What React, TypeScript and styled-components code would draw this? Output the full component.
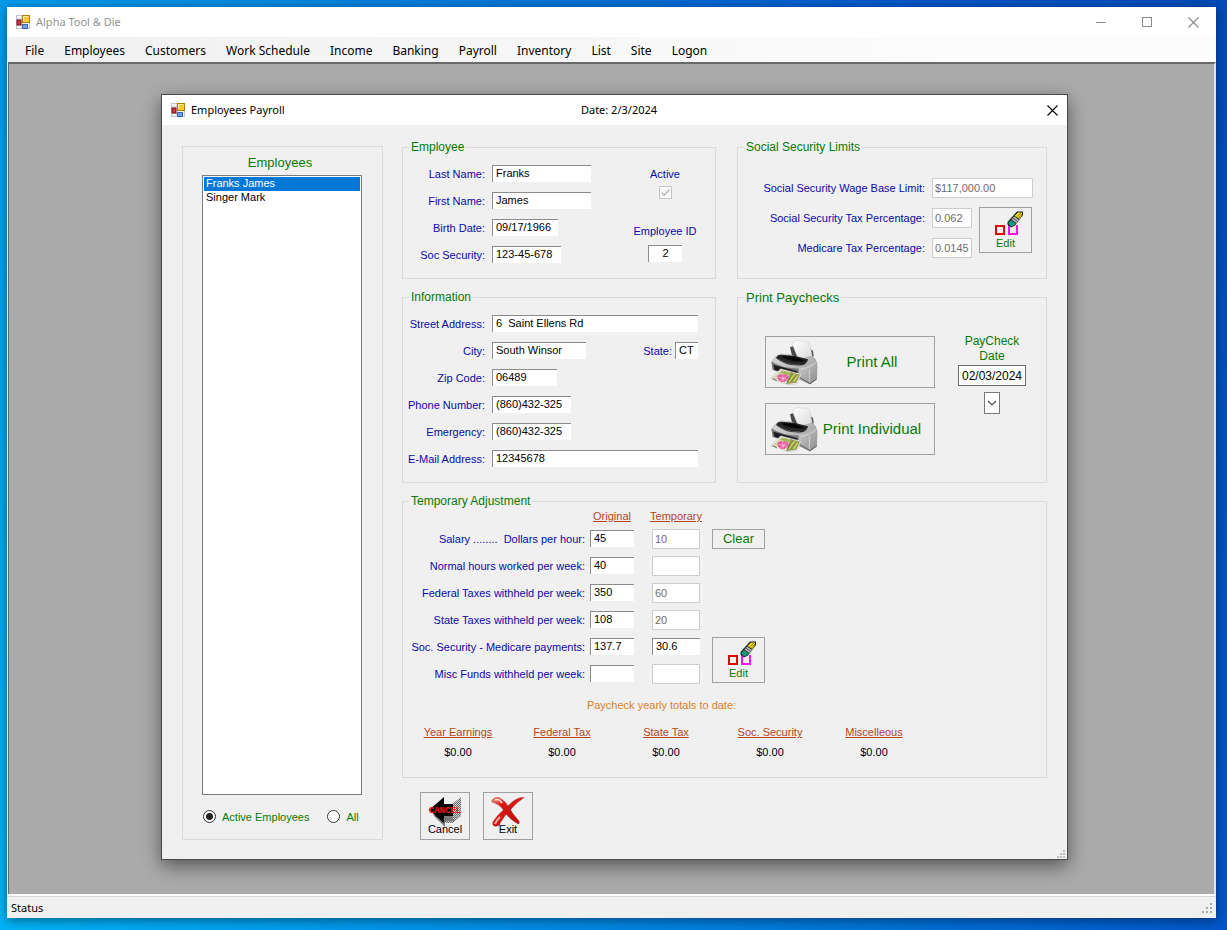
import React from "react";
import styled, { createGlobalStyle, css } from "styled-components";

const GREEN = "#087a08";
const BLUE = "#0a0aa8";
const RUST = "#b5451b";
const FACE = "#f0f0f0";

const GlobalStyle = createGlobalStyle`
  *, *::before, *::after { box-sizing: border-box; }
  body { margin: 0; font-family: "Liberation Sans", Arial, sans-serif; font-size: 11px; line-height: 14px; color: #000; }
  button, input, select { font: inherit; color: inherit; }
`;

const Desktop = styled.div`
  min-height: 100vh;
  min-width: 1227px;
  display: flex;
  padding: 7px 11px 12px 7px;
  background: linear-gradient(72deg, #00b2f4 0%, #0096e8 25%, #0078d9 52%, #0056c8 80%, #004bb8 100%);
`;

const AppWindow = styled.div`
  flex: 1;
  display: flex;
  flex-direction: column;
  background: #fff;
  box-shadow: 0 2px 10px rgba(0, 0, 0, 0.45);
`;

const TitleBar = styled.header`
  height: 30px;
  display: flex;
  align-items: center;
  padding-left: 9px;
  gap: 5px;
  font-family: "Noto Sans", "Open Sans", sans-serif;
  font-size: 11px;
  color: #929292;
`;

const TitleText = styled.h1`
  flex: 1;
  margin: 0;
  font: inherit;
`;

const WindowButtons = styled.div`
  display: flex;
`;

const CaptionButton = styled.button`
  width: 46px;
  height: 30px;
  display: flex;
  align-items: center;
  justify-content: center;
  padding: 0;
  border: 0;
  background: transparent;
`;

const MenuBar = styled.nav`
  height: 25px;
  display: flex;
  align-items: center;
  padding: 3px 0 0 8px;
  background: linear-gradient(90deg, #f0f0f0, #fcfcfc 80%);
`;

const MenuItem = styled.button`
  padding: 0 10px;
  border: 0;
  background: transparent;
  font-family: "Noto Sans", "Open Sans", sans-serif;
  font-size: 12px;
  line-height: 20px;
  white-space: nowrap;
`;

const Workspace = styled.main`
  flex: 1;
  display: flex;
  padding: 30px 146px 34px 152px;
  margin-left: 1px;
  background: #ababab;
  border: solid #696969;
  border-width: 2px 0 0 1px;
  border-right: 2px solid #e3e3e3;
`;

const StatusBar = styled.footer`
  height: 24px;
  display: flex;
  align-items: center;
  justify-content: space-between;
  padding: 2px 3px 0 4px;
  background: ${FACE};
  border-top: 2px solid #fff;
  box-shadow: inset 0 1px #d7d7d7;
  font-family: "Noto Sans", "Open Sans", sans-serif;
  font-size: 11px;
`;

const Dialog = styled.section`
  flex: 1;
  min-width: 907px;
  display: flex;
  flex-direction: column;
  background: ${FACE};
  border: 1px solid #484848;
  box-shadow: 0 6px 18px rgba(0, 0, 0, 0.5);
`;

const DialogTitle = styled.header`
  height: 30px;
  display: grid;
  grid-template-columns: 1fr auto 1fr;
  align-items: center;
  padding-left: 9px;
  background: #fff;
  font-family: "Noto Sans", "Open Sans", sans-serif;
  font-size: 11px;
`;

const DialogName = styled.h2`
  display: flex;
  align-items: center;
  gap: 5px;
  margin: 0;
  font: inherit;
`;

const DialogClose = styled(CaptionButton)`
  width: 30px;
  justify-self: end;
`;

const DialogBody = styled.div`
  flex: 1;
  display: grid;
  grid-template-columns: 201px minmax(0, 1fr);
  column-gap: 19px;
  padding: 15px 20px 0;
`;

const DialogFoot = styled.div`
  height: 19px;
  display: flex;
  justify-content: flex-end;
  align-items: flex-end;
  padding: 0 1px 0;
`;

const GroupBox = styled.fieldset<{ $wide?: boolean }>`
  min-width: 0;
  margin: 0;
  padding: 0;
  border: 1px solid #dadada;
  ${(p) => p.$wide && css`grid-column: 1 / -1;`}
`;

const GroupTitle = styled.legend<{ $large?: boolean }>`
  margin-left: 6px;
  padding: 0 2px;
  font-size: ${(p) => (p.$large ? 13 : 12)}px;
  line-height: 15px;
  color: ${GREEN};
`;

const EmployeePanel = styled.section`
  display: flex;
  flex-direction: column;
  margin-top: 6px;
  padding: 8px 20px 0 19px;
  border: 1px solid #dadada;
`;

const PanelTitle = styled.label`
  padding: 0 4px 5px 0;
  text-align: center;
  font-size: 13px;
  line-height: 15px;
  color: ${GREEN};
`;

const EmployeeList = styled.select`
  flex: 1;
  padding: 1px;
  overflow: hidden;
  border: 1px solid #7a7a7a;
  border-radius: 0;
  outline: 0;
  background: #fff;

  option {
    min-height: 14px;
    padding: 0 2px;
    line-height: 14px;
    color: #000;
  }
  option:checked {
    background: linear-gradient(#0078d7, #0078d7);
    -webkit-text-fill-color: #fff;
  }
`;

const FilterRow = styled.div`
  height: 44px;
  display: flex;
  align-items: center;
  gap: 18px;
  padding: 0 0 1px 1px;
`;

const FilterOption = styled.label`
  display: flex;
  align-items: center;
  gap: 6px;
  color: ${GREEN};
`;

const Radio = styled.input`
  appearance: none;
  width: 13px;
  height: 13px;
  margin: 0;
  border: 1px solid #333;
  border-radius: 50%;
  background: #fff;
  &:checked {
    background: radial-gradient(circle, #222 3px, #fff 4px);
  }
`;

const Content = styled.div`
  min-width: 0;
  display: flex;
  flex-direction: column;
`;

const Groups = styled.div`
  display: grid;
  grid-template-columns: 314px minmax(310px, 1fr);
  gap: 11px 21px;
`;

const ActionRow = styled.div`
  display: flex;
  gap: 13px;
  padding: 14px 18px 0;
`;

const Split = styled.div`
  display: flex;
  padding: 5px 17px 10px 0;
`;

const FieldGrid = styled.div`
  flex: 1;
  display: grid;
  grid-template-columns: 82px minmax(0, 1fr);
  grid-auto-rows: 27px;
  column-gap: 7px;
  align-items: center;
`;

const FieldLabel = styled.label<{ $right?: boolean }>`
  color: ${BLUE};
  white-space: nowrap;
  ${(p) => p.$right && css`justify-self: end;`}
`;

const TextBox = styled.input<{ $width?: number; $center?: boolean }>`
  width: ${(p) => (p.$width ? `${p.$width}px` : "100%")};
  height: 17px;
  padding: 0 3px 2px;
  border: solid #8c8c8c;
  border-width: 1px 0 0 1px;
  border-radius: 0;
  outline: 0;
  background: #fff;
  text-align: ${(p) => (p.$center ? "center" : "left")};

  &:disabled {
    height: 20px;
    padding: 0 2px;
    border: 1px solid #cccccc;
    color: #6d6d6d;
  }
`;

const CityLine = styled.div`
  display: flex;
  align-items: center;
  gap: 3px;
`;

const StateField = styled.div`
  display: flex;
  align-items: center;
  gap: 3px;
  margin-left: auto;
`;

const SideColumn = styled.div`
  width: 66px;
  display: flex;
  flex-direction: column;
  justify-content: space-between;
  padding: 7px 0 6px;
`;

const SideField = styled.div<{ $gap: number }>`
  display: flex;
  flex-direction: column;
  align-items: center;
  gap: ${(p) => p.$gap}px;
`;

const CheckBox = styled.input`
  appearance: none;
  width: 13px;
  height: 13px;
  margin: 0;
  border: 1px solid #c4c4c4;
  background: #fbfbfb;
  &:checked {
    background: #fbfbfb
      url("data:image/svg+xml,%3Csvg xmlns='http://www.w3.org/2000/svg' viewBox='0 0 11 11'%3E%3Cpath d='M1.5 5.5l2.7 2.7L9.5 2.5' fill='none' stroke='%23b4b4b4' stroke-width='1.3'/%3E%3C/svg%3E");
  }
`;

const LimitsGrid = styled.div`
  display: grid;
  grid-template-columns: 1fr 40px 54px;
  grid-auto-rows: 30px;
  column-gap: 7px;
  align-items: center;
  padding: 18px 13px 0 0;
`;

const WideCell = styled.div`
  grid-column: span 2;
`;

const PushButton = styled.button`
  display: flex;
  align-items: center;
  justify-content: center;
  padding: 0;
  border: 1px solid #a0a0a0;
  border-radius: 0;
  background: ${FACE};
  color: ${GREEN};
`;

const EditButton = styled(PushButton)`
  grid-row: span 2;
  align-self: start;
  width: 53px;
  height: 46px;
  margin-top: 4px;
  flex-direction: column;
`;

const ClearButton = styled(PushButton)`
  width: 53px;
  height: 20px;
  font-size: 13px;
`;

const PrintButton = styled(PushButton)`
  width: 170px;
  height: 52px;
  padding: 0 8px 0 4px;
  font-size: 15px;
`;

const PrintLabel = styled.span`
  flex: 1;
  text-align: center;
  white-space: nowrap;
`;

const ActionButton = styled(PushButton)`
  width: 50px;
  height: 48px;
  flex-direction: column;
  justify-content: flex-start;
  padding-top: 3px;
  color: #000;
`;

const ActionLabel = styled.span`
  position: relative;
  margin-top: -6px;
`;

const PrintLayout = styled.div`
  display: flex;
  justify-content: space-between;
  padding: 29px 20px 0 27px;
`;

const PrintButtons = styled.div`
  display: flex;
  flex-direction: column;
  gap: 15px;
  padding-top: 2px;
`;

const DateColumn = styled.div`
  width: 68px;
  display: flex;
  flex-direction: column;
  align-items: center;
`;

const DateLabel = styled.label`
  font-size: 12px;
  line-height: 15px;
  text-align: center;
  color: ${GREEN};
`;

const DateBox = styled.input`
  width: 68px;
  height: 21px;
  margin: 1px 0 6px;
  padding: 0;
  border: 1px solid #6a6a6a;
  border-radius: 0;
  background: #fff;
  font-size: 12px;
  text-align: center;
`;

const DateDrop = styled(PushButton)`
  width: 16px;
  height: 22px;
  border-color: #7a7a7a;
  background: #fff;
`;

const AdjustGrid = styled.div`
  display: grid;
  grid-template-columns: 187px 44px 78px 53px;
  grid-template-rows: 16px;
  grid-auto-rows: 27px;
  align-items: center;
`;

const AdjustLabel = styled(FieldLabel)`
  grid-column: 1;
  justify-self: end;
  padding-right: 5px;
  white-space: pre;
`;

const ColumnTitle = styled.span`
  align-self: start;
  color: ${RUST};
  text-decoration: underline;
  text-align: center;
`;

const OriginalTitle = styled(ColumnTitle)`
  grid-column: 2;
`;

const TemporaryCell = styled.div`
  align-self: stretch;
  display: flex;
  align-items: center;
  justify-content: center;
  padding-left: 6px;
`;

const Totals = styled.table`
  width: 520px;
  margin-left: 3px;
  margin-bottom: 18px;
  table-layout: fixed;
  border-collapse: collapse;

  caption {
    padding: 11px 9px 13px 0;
    color: #dc7f2a;
  }
  th {
    padding: 0 0 6px;
    font-weight: normal;
    text-decoration: underline;
    color: ${RUST};
  }
  td {
    padding: 0;
    text-align: center;
  }
`;

const Grip = () => (
  <svg width="12" height="12" viewBox="0 0 12 12" fill="#a8a8a8" aria-hidden="true">
    <path d="M9 1h2v2H9zM9 5h2v2H9zM9 9h2v2H9zM5 5h2v2H5zM5 9h2v2H5zM1 9h2v2H1z" />
  </svg>
);

const DialogGrip = () => (
  <svg width="10" height="10" viewBox="0 0 10 10" fill="#bcbcbc" aria-hidden="true">
    <path d="M7 1h2v2H7zM7 4h2v2H7zM7 7h2v2H7zM4 4h2v2H4zM4 7h2v2H4zM1 7h2v2H1z" />
  </svg>
);

const FormIcon = () => (
  <svg width="15" height="15" viewBox="0 0 15 15" aria-hidden="true">
    <rect x="0.5" y="0.5" width="13" height="13" fill="#f4f4f4" stroke="#c4c4c8" />
    <path d="M6 1v12M1 4h5M1 10h6" stroke="#c8c8cc" />
    <rect x="1" y="5" width="4" height="5" fill="#c43c3c" stroke="#7d1016" />
    <rect x="6.5" y="0.5" width="7" height="7" fill="#f6c93a" stroke="#a87d12" />
    <path d="M7.5 6V1.5H12" fill="none" stroke="#fdeaa0" />
    <rect x="6.5" y="9.5" width="5" height="4" fill="#6f9fe8" stroke="#3a66b8" />
  </svg>
);

const CloseGlyph = ({ color }: { color: string }) => (
  <svg width="11" height="11" viewBox="0 0 11 11" aria-hidden="true">
    <path d="M0.5 0.5l10 10M10.5 0.5l-10 10" stroke={color} strokeWidth="1.1" />
  </svg>
);

const EditIcon = () => (
  <svg width="34" height="25" viewBox="0 0 34 25" aria-hidden="true">
    <rect x="7" y="15" width="8" height="8" fill="none" stroke="#e00808" strokeWidth="2" />
    <path d="M20 14v9h8v-9" fill="none" stroke="#e61be6" strokeWidth="2" />
    <path d="M18.5 11L28 0.5h6V4l-8 10.5-4 2-3.5-3z" fill="#1c1c1c" />
    <path d="M19.5 11.5L22 9l5 3.5-1.5 1.5-3.5 1.5-2.5-2.5z" fill="#149a78" />
    <path d="M22.5 8.5L25 5.5l5 3.5-2.5 3z" fill="#bdbdbd" />
    <path d="M23.7 7l5 3.5" stroke="#4a4a4a" />
    <path d="M25.5 5L29 1.5h4V4l-2.5 4z" fill="#f2df20" />
    <path d="M27.5 6l5-4.5M29.5 7l3.5-4" stroke="#6e6212" strokeWidth="0.8" />
  </svg>
);

const PrinterIcon = ({ id }: { id: string }) => (
  <svg width="48" height="46" viewBox="16 15 144 138" aria-hidden="true">
    <defs>
      <linearGradient id={`${id}-case`} x1="0" y1="0" x2="1" y2="1">
        <stop offset="0" stopColor="#dcdcdc" />
        <stop offset="0.5" stopColor="#b6b6b6" />
        <stop offset="1" stopColor="#7a7a7a" />
      </linearGradient>
      <linearGradient id={`${id}-side`} x1="0" y1="0" x2="1" y2="1">
        <stop offset="0" stopColor="#cfcfcf" />
        <stop offset="1" stopColor="#8c8c8c" />
      </linearGradient>
      <linearGradient id={`${id}-paper`} x1="0" y1="0" x2="1" y2="1">
        <stop offset="0" stopColor="#ffffff" />
        <stop offset="1" stopColor="#d9d9d9" />
      </linearGradient>
    </defs>
    <path d="M76 40l11-4 14 37-16 4z" fill="#4a4a4a" />
    <path d="M134 44l11 6 2 14-4 12-12-2z" fill="#5a5a5a" />
    <path d="M84 34q2-13 12-14l30 2q8 1 10 10l7 36q-20 12-42 8z" fill={`url(#${id}-paper)`} stroke="#b4b4b4" />
    <path d="M22 84q6-16 24-24l34 2 26 14 36-10q13 8 15 24l-1 44-20 16-34-16-78-28z" fill={`url(#${id}-case)`} stroke="#8c8c8c" />
    <path d="M34 72q4-10 16-10l42 4 38 10q-2 14-18 18-48 4-78-22z" fill="#262626" />
    <path d="M52 66l36 2 34 12q-24 8-66-8z" fill="#080808" />
    <path d="M42 76q30 18 64 16" fill="none" stroke="#646464" strokeWidth="2" />
    <path d="M20 82q30 22 84 22l2 26-82-22z" fill="#777" />
    <path d="M26 92l72 20v14l-68-18z" fill="#1b1b1b" />
    <path d="M102 102q28-4 48-22l8 18-2 38-20 15-34-15z" fill={`url(#${id}-side)`} />
    <path d="M108 106q26-2 46-20M134 106v40" fill="none" stroke="#e6e6e6" strokeWidth="2" />
    <path d="M104 130l32 19 20-14" fill="none" stroke="#5a5a5a" strokeWidth="3" />
    <path d="M18 134l30-30 62 16-14 30-26 2z" fill="#ededed" stroke="#9c9c9c" />
    <path d="M24 132l26-24 32 8-22 30z" fill="#dccfae" />
    <path d="M78 114l28 8-12 24-30 4z" fill="#8b9648" />
    <path d="M72 144l20-26M86 144l14-20" stroke="#d9d36c" strokeWidth="4" />
    <path d="M44 114l14-4 22 7-12 8z" fill="#a6b45e" />
    <path d="M38 128q6-10 16-6 14-2 18 6-2 12-14 16-16 2-20-16z" fill="#e35aa0" />
    <path d="M42 130l24 6M54 124l2 18M66 126l-18 14" stroke="#fbd4e6" strokeWidth="2" />
    <path d="M24 134l12 6M68 144l8-12" stroke="#5a6c2a" strokeWidth="3" />
  </svg>
);

const CancelIcon = () => (
  <svg width="34" height="32" viewBox="0 0 34 32" aria-hidden="true">
    <defs>
      <pattern id="cancel-dither" width="2" height="2" patternUnits="userSpaceOnUse">
        <rect width="2" height="2" fill="#cccccc" />
        <path d="M0 0h1v1H0zM1 1h1v1H1z" fill="#707070" />
      </pattern>
    </defs>
    <path d="M16 8h8l9-7v19l-8 7h-8z" fill="url(#cancel-dither)" />
    <path d="M5 19l12 12v-6h9l-2-5H13z" fill="#7a7a7a" />
    <path d="M1 14L16 1v7h9v12h-9v7z" fill="#000" />
    <text x="17" y="17" textAnchor="middle" fontFamily="Liberation Mono, monospace" fontSize="9" fontWeight="bold" fill="#f01818">CANCEL</text>
  </svg>
);

const ExitIcon = () => (
  <svg width="34" height="32" viewBox="0 0 34 32" aria-hidden="true">
    <defs>
      <linearGradient id="exit-red" x1="0" y1="0" x2="0.6" y2="1">
        <stop offset="0" stopColor="#f2a8a0" />
        <stop offset="0.35" stopColor="#dc1a14" />
        <stop offset="1" stopColor="#c01010" />
      </linearGradient>
    </defs>
    <path d="M33 1.5Q25 1 17 10Q6 19 2 26Q1 31 6 30Q9 30 9 27Q13 20 20 13Q26 6 33 1.5z" fill="url(#exit-red)" stroke="#b41c18" strokeWidth="0.5" />
    <path d="M1 4Q4 0 9 2Q14 5 17 10Q22 19 28 25Q29 28 27 28Q18 23 13 15Q9 8 1 6z" fill="url(#exit-red)" stroke="#b41c18" strokeWidth="0.5" />
    <path d="M4 4Q8 2 11 7" fill="none" stroke="#fbd8d2" strokeWidth="1.5" />
    <path d="M4 28Q5 25 9 21" fill="none" stroke="#f6a8a0" strokeWidth="2" />
  </svg>
);

const MENU = ["File", "Employees", "Customers", "Work Schedule", "Income", "Banking", "Payroll", "Inventory", "List", "Site", "Logon"];

const EMPLOYEE_FIELDS = [
  { id: "last", label: "Last Name:", value: "Franks", width: 99 },
  { id: "first", label: "First Name:", value: "James", width: 99 },
  { id: "birth", label: "Birth Date:", value: "09/17/1966", width: 66 },
  { id: "ssn", label: "Soc Security:", value: "123-45-678", width: 69 },
];

const CONTACT_FIELDS = [
  { id: "zip", label: "Zip Code:", value: "06489", width: 65 },
  { id: "phone", label: "Phone Number:", value: "(860)432-325", width: 79 },
  { id: "emergency", label: "Emergency:", value: "(860)432-325", width: 79 },
  { id: "email", label: "E-Mail Address:", value: "12345678", width: 0 },
];

const ADJUSTMENTS = [
  { id: "salary", label: "Salary ........  Dollars per hour:", original: "45", temporary: "10", locked: true },
  { id: "hours", label: "Normal hours worked per week:", original: "40", temporary: "", locked: true },
  { id: "federal", label: "Federal Taxes withheld per week:", original: "350", temporary: "60", locked: true },
  { id: "state-tax", label: "State Taxes withheld per week:", original: "108", temporary: "20", locked: true },
  { id: "medicare", label: "Soc. Security - Medicare payments:", original: "137.7", temporary: "30.6", locked: false },
  { id: "misc", label: "Misc Funds withheld per week:", original: "", temporary: "", locked: true },
];

const TOTALS = [
  ["Year Earnings", "$0.00"],
  ["Federal Tax", "$0.00"],
  ["State Tax", "$0.00"],
  ["Soc. Security", "$0.00"],
  ["Miscelleous", "$0.00"],
];

type Field = { id: string; label: string; value: string; width: number };

const FieldRow = ({ id, label, value, width }: Field) => (
  <>
    <FieldLabel $right htmlFor={id}>{label}</FieldLabel>
    <TextBox id={id} defaultValue={value} $width={width} />
  </>
);

const EmployeesSidebar = () => (
  <EmployeePanel>
    <PanelTitle htmlFor="employee-list">Employees</PanelTitle>
    <EmployeeList id="employee-list" size={20} defaultValue="Franks James">
      <option>Franks James</option>
      <option>Singer Mark</option>
    </EmployeeList>
    <FilterRow>
      <FilterOption>
        <Radio type="radio" name="filter" defaultChecked />
        Active Employees
      </FilterOption>
      <FilterOption>
        <Radio type="radio" name="filter" />
        All
      </FilterOption>
    </FilterRow>
  </EmployeePanel>
);

const EmployeeGroup = () => (
  <GroupBox>
    <GroupTitle>Employee</GroupTitle>
    <Split>
      <FieldGrid>
        {EMPLOYEE_FIELDS.map((f) => <FieldRow key={f.id} {...f} />)}
      </FieldGrid>
      <SideColumn>
        <SideField $gap={5}>
          <FieldLabel htmlFor="active">Active</FieldLabel>
          <CheckBox id="active" type="checkbox" defaultChecked disabled />
        </SideField>
        <SideField $gap={7}>
          <FieldLabel htmlFor="employee-id">Employee ID</FieldLabel>
          <TextBox id="employee-id" defaultValue="2" $width={34} $center />
        </SideField>
      </SideColumn>
    </Split>
  </GroupBox>
);

const LimitsGroup = () => (
  <GroupBox>
    <GroupTitle>Social Security Limits</GroupTitle>
    <LimitsGrid>
      <FieldLabel $right htmlFor="wage-limit">Social Security Wage Base Limit:</FieldLabel>
      <WideCell><TextBox id="wage-limit" defaultValue="$117,000.00" disabled /></WideCell>
      <FieldLabel $right htmlFor="ss-rate">Social Security Tax Percentage:</FieldLabel>
      <TextBox id="ss-rate" defaultValue="0.062" disabled />
      <EditButton type="button"><EditIcon />Edit</EditButton>
      <FieldLabel $right htmlFor="medicare-rate">Medicare Tax Percentage:</FieldLabel>
      <TextBox id="medicare-rate" defaultValue="0.0145" disabled />
    </LimitsGrid>
  </GroupBox>
);

const InformationGroup = () => (
  <GroupBox>
    <GroupTitle>Information</GroupTitle>
    <Split>
      <FieldGrid>
        <FieldRow id="street" label="Street Address:" value="6  Saint Ellens Rd" width={0} />
        <FieldLabel $right htmlFor="city">City:</FieldLabel>
        <CityLine>
          <TextBox id="city" defaultValue="South Winsor" $width={94} />
          <StateField>
            <FieldLabel htmlFor="state">State:</FieldLabel>
            <TextBox id="state" defaultValue="CT" $width={23} />
          </StateField>
        </CityLine>
        {CONTACT_FIELDS.map((f) => <FieldRow key={f.id} {...f} />)}
      </FieldGrid>
    </Split>
  </GroupBox>
);

const PaychecksGroup = () => (
  <GroupBox>
    <GroupTitle $large>Print Paychecks</GroupTitle>
    <PrintLayout>
      <PrintButtons>
        <PrintButton type="button"><PrinterIcon id="all" /><PrintLabel>Print All</PrintLabel></PrintButton>
        <PrintButton type="button"><PrinterIcon id="one" /><PrintLabel>Print Individual</PrintLabel></PrintButton>
      </PrintButtons>
      <DateColumn>
        <DateLabel htmlFor="paycheck-date">PayCheck Date</DateLabel>
        <DateBox id="paycheck-date" defaultValue="02/03/2024" />
        <DateDrop type="button" aria-label="Choose date">
          <svg width="10" height="6" viewBox="0 0 10 6" aria-hidden="true">
            <path d="M1 1l4 4 4-4" fill="none" stroke="#444" strokeWidth="1.1" />
          </svg>
        </DateDrop>
      </DateColumn>
    </PrintLayout>
  </GroupBox>
);

const AdjustmentGroup = () => (
  <GroupBox $wide>
    <GroupTitle>Temporary Adjustment</GroupTitle>
    <AdjustGrid>
      <OriginalTitle>Original</OriginalTitle>
      <TemporaryCell><ColumnTitle>Temporary</ColumnTitle></TemporaryCell>
      {ADJUSTMENTS.map((row) => (
        <React.Fragment key={row.id}>
          <AdjustLabel htmlFor={row.id}>{row.label}</AdjustLabel>
          <TextBox id={row.id} defaultValue={row.original} />
          <TemporaryCell>
            <TextBox aria-label={row.label} defaultValue={row.temporary} $width={48} disabled={row.locked} />
          </TemporaryCell>
          {row.id === "salary" && <ClearButton type="button">Clear</ClearButton>}
          {row.id === "medicare" && <EditButton type="button"><EditIcon />Edit</EditButton>}
        </React.Fragment>
      ))}
    </AdjustGrid>
    <Totals>
      <caption>Paycheck yearly totals to date:</caption>
      <thead>
        <tr>{TOTALS.map(([name]) => <th key={name} scope="col">{name}</th>)}</tr>
      </thead>
      <tbody>
        <tr>{TOTALS.map(([name, amount]) => <td key={name}>{amount}</td>)}</tr>
      </tbody>
    </Totals>
  </GroupBox>
);

export default function App() {
  return (
    <>
      <GlobalStyle />
      <Desktop>
        <AppWindow>
          <TitleBar>
            <FormIcon />
            <TitleText>Alpha Tool &amp; Die</TitleText>
            <WindowButtons>
              <CaptionButton type="button" aria-label="Minimize">
                <svg width="11" height="11" viewBox="0 0 11 11" aria-hidden="true"><path d="M0 5.5h10" stroke="#8a8a8a" /></svg>
              </CaptionButton>
              <CaptionButton type="button" aria-label="Maximize">
                <svg width="11" height="11" viewBox="0 0 11 11" aria-hidden="true"><rect x="0.5" y="0.5" width="9" height="9" fill="none" stroke="#8a8a8a" /></svg>
              </CaptionButton>
              <CaptionButton type="button" aria-label="Close"><CloseGlyph color="#8a8a8a" /></CaptionButton>
            </WindowButtons>
          </TitleBar>
          <MenuBar>
            {MENU.map((item) => <MenuItem key={item} type="button">{item}</MenuItem>)}
          </MenuBar>
          <Workspace>
            <Dialog>
              <DialogTitle>
                <DialogName><FormIcon />Employees Payroll</DialogName>
                <span>Date: 2/3/2024</span>
                <DialogClose type="button" aria-label="Close"><CloseGlyph color="#000" /></DialogClose>
              </DialogTitle>
              <DialogBody>
                <EmployeesSidebar />
                <Content>
                  <Groups>
                    <EmployeeGroup />
                    <LimitsGroup />
                    <InformationGroup />
                    <PaychecksGroup />
                    <AdjustmentGroup />
                  </Groups>
                  <ActionRow>
                    <ActionButton type="button"><CancelIcon /><ActionLabel>Cancel</ActionLabel></ActionButton>
                    <ActionButton type="button"><ExitIcon /><ActionLabel>Exit</ActionLabel></ActionButton>
                  </ActionRow>
                </Content>
              </DialogBody>
              <DialogFoot><DialogGrip /></DialogFoot>
            </Dialog>
          </Workspace>
          <StatusBar><span>Status</span><Grip /></StatusBar>
        </AppWindow>
      </Desktop>
    </>
  );
}
